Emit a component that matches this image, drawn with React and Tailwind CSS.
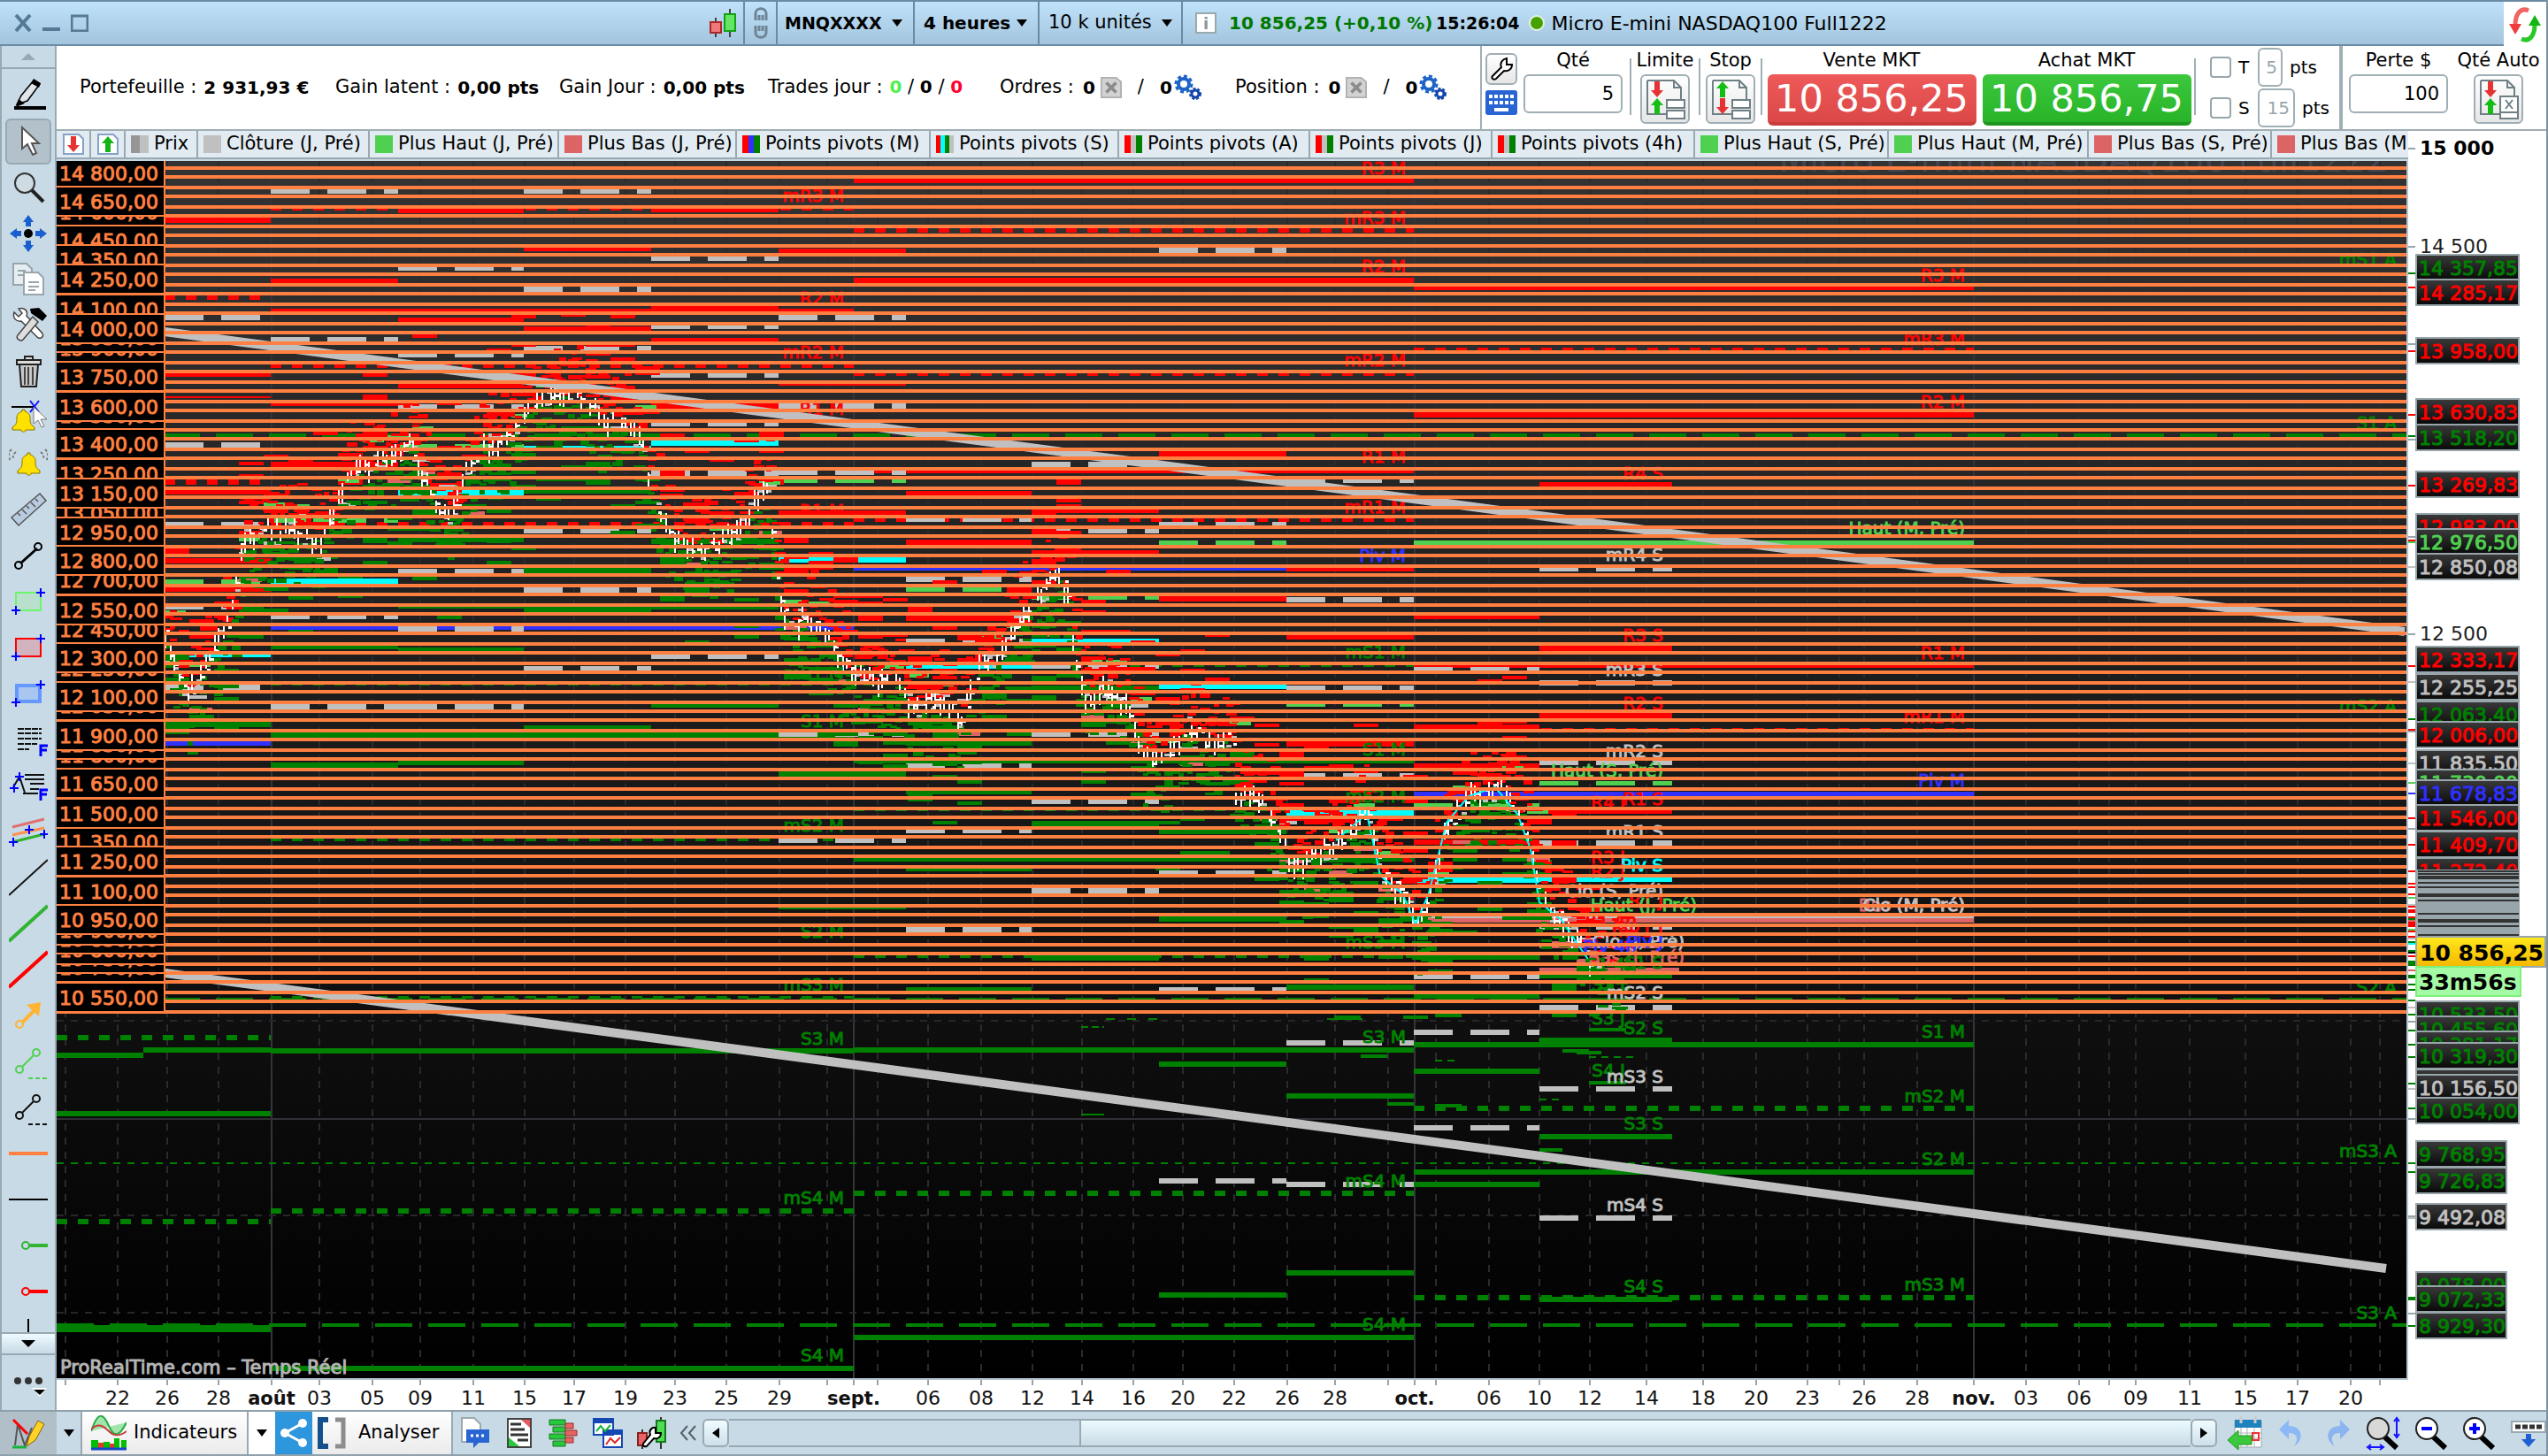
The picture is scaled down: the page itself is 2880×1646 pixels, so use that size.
import React from "react";

const RED = "#ff0000";
const GREEN = "#008000";
const LIME = "#50d050";
const GREY = "#c0c0c0";
const ROSE = "#dc6464";
const BLUE = "#3030ff";
const CYAN = "#00ffff";
const ORANGE = "#ff8040";
const EDGE = "#98a6ac";

const priceY = (p) => Math.floor((169 + (15000 - p) * 0.2193) / 2) * 2;
const priceText = (p) => {
  const s = String(p);
  return `${s.slice(0, -3)} ${s.slice(-3)},00`;
};

/* ---------- chart data ---------- */

const DATES = [
  [74, ""], [133, "22"], [189, "26"], [247, "28"], [307, "août"], [361, "03"], [421, "05"], [475, "09"],
  [535, "11"], [593, "15"], [649, "17"], [707, "19"], [763, "23"], [821, "25"], [881, "29"], [935, ""],
  [965, "sept."], [992, ""], [1049, "06"], [1109, "08"], [1167, "12"], [1223, "14"], [1281, "16"],
  [1337, "20"], [1395, "22"], [1455, "26"], [1509, "28"], [1569, ""], [1599, "oct."], [1623, ""],
  [1683, "06"], [1740, "10"], [1797, "12"], [1861, "14"], [1925, "18"], [1985, "20"], [2043, "23"],
  [2079, ""], [2107, "26"], [2167, "28"], [2231, "nov."], [2290, "03"], [2350, "06"], [2384, ""],
  [2414, "09"], [2475, "11"], [2538, "15"], [2597, "17"], [2657, "20"], [2690, ""],
];

const WEEKS = [186, 306, 450, 592, 736, 880, 1024, 1166, 1310, 1454, 1598, 1740, 1890];

const WEEK_LEVELS = [
  { r: [249, 423, 556, 634, 666], g: [819], w: [359, 503, 593, 686, 777], l: [657], c: [740], b: [840] },
  { r: [318, 456, 525], g: [731, 865], w: [216, 384, 697, 799], l: [588], c: [657], b: [] },
  { r: [238, 362, 436], g: [610, 685, 735, 862], w: [303, 401, 460, 646, 711, 799], l: [504], c: [557], b: [] },
  { r: [281, 372], g: [555, 645, 689, 823], w: [216, 327, 394, 600, 667, 756], l: [], c: [507], b: [] },
  { r: [237, 349, 385, 459], g: [612, 686, 797], w: [292, 369, 424, 479, 535, 742], l: [], c: [501], b: [] },
  { r: [284, 433, 580], g: [875, 1025], w: [359, 459, 534, 830, 950], l: [543], c: [633], b: [] },
  { r: [558, 613, 699], g: [840, 895, 982, 1119], w: [587, 655, 725, 866, 939, 1051], l: [666], c: [753], b: [] },
  { r: [577, 625], g: [778, 931, 1083], w: [525, 600, 753, 830, 906, 1007], l: [675], c: [725], b: [] },
  { r: [513, 677], g: [940, 1039, 1203, 1464], w: [283, 593, 987, 1119, 1335], l: [613], c: [776], b: [] },
  { r: [643, 720, 841], g: [1116, 1239, 1439], w: [543, 678, 778, 877, 1179, 1339], l: [796], c: [919], b: [] },
  { r: [697, 822, 866, 952], g: [1082, 1126, 1211, 1339], w: [757, 1104, 1167, 1275], l: [910], c: [995], b: [] },
  { r: [548, 733, 809, 917], g: [1103, 1176, 1285, 1469], w: [643, 772, 862, 953, 1048, 1139, 1231, 1377], l: [885], c: [994], b: [] },
];

const line = (x1, x2, y, color, h = 6, dash) => ({ x1, x2, y, color, h, dash });
const DOTS = "12 12";

const MONTH_LINES = [
  line(64, 306, 1173, GREEN, 6, DOTS), line(64, 162, 1193, GREEN), line(162, 306, 1187, GREEN), line(64, 306, 1259, GREEN),
  line(64, 306, 1381, GREEN, 6, DOTS), line(64, 306, 1502, GREEN, 8), line(186, 306, 336, RED, 6, DOTS),
  line(186, 306, 545, RED, 6, DOTS), line(186, 306, 449, RED, 2),
  line(306, 965, 237, RED, 2, DOTS), line(306, 965, 351, RED, 4), line(306, 965, 413, RED, 6, DOTS),
  line(306, 965, 592, RED, 4, DOTS), line(306, 965, 709, BLUE), line(306, 965, 773, GREEN, 3, DOTS),
  line(306, 965, 831, GREEN), line(306, 965, 949, GREEN, 3, DOTS), line(306, 965, 1068, GREEN, 2),
  line(306, 965, 1127, GREEN, 3, DOTS), line(306, 965, 1188, GREEN), line(306, 965, 1369, GREEN, 6, DOTS),
  line(306, 965, 1547, GREEN),
  line(965, 1598, 204, RED), line(965, 1598, 260, RED, 6, DOTS), line(965, 1598, 317, RED), line(965, 1598, 422, RED, 5, DOTS),
  line(965, 1598, 533, RED, 3), line(965, 1598, 588, RED, 4, DOTS), line(965, 1598, 643, BLUE, 4),
  line(965, 1598, 751, GREEN, 5, DOTS), line(965, 1598, 861, GREEN, 3), line(965, 1598, 916, GREEN, 2, DOTS),
  line(965, 1598, 972, GREEN, 4), line(965, 1598, 1081, GREEN, 3, DOTS), line(965, 1598, 1187, GREEN),
  line(965, 1598, 1349, GREEN, 6, DOTS), line(965, 1598, 1512, GREEN),
  line(1598, 2231, 325, RED, 5), line(1598, 2231, 395, RED, 5, DOTS), line(1598, 2231, 469, RED), line(1598, 2231, 752, RED),
  line(1598, 2231, 824, RED, 3, DOTS), line(1598, 2231, 613, LIME, 5), line(1598, 2231, 897, BLUE, 5),
  line(1598, 2231, 1036, GREY, 4), line(1598, 2231, 1040, ROSE, 5), line(1598, 2231, 1181, GREEN),
  line(1598, 2231, 1253, GREEN, 6, DOTS), line(1598, 2231, 1325, GREEN), line(1598, 2231, 1467, GREEN, 6, DOTS),
  line(64, 2720, 492, GREEN, 4, "42 18"), line(64, 2720, 1129, GREEN, 3, "42 18"),
  line(64, 2720, 1315, GREEN, 2, "8 8"), line(64, 2720, 1498, GREEN, 4, "42 18"),
];

const SMALL_LINES = [
  line(1508, 1538, 1150, GREEN, 4), line(1538, 1568, 1194, GREEN, 4), line(1568, 1598, 1248, GREEN, 4),
  line(1622, 1652, 1148, GREEN, 4), line(1622, 1652, 1250, GREEN, 4), line(1766, 1796, 1188, GREEN, 4),
  line(1740, 1766, 1300, GREEN, 4), line(1796, 1838, 1164, GREEN, 4), line(1796, 1838, 1224, GREEN, 4),
  line(1796, 1846, 1195, GREEN, 2, "8 6"), line(1740, 1766, 1243, GREEN, 2, "8 6"), line(1622, 1646, 1199, GREEN, 2, "8 6"),
  line(1222, 1248, 1260, GREEN, 2), line(1222, 1248, 1161, GREEN, 2, "8 4"), line(1250, 1320, 1152, GREEN, 2, "10 14"),
  line(1740, 1898, 1096, ROSE, 4), line(1740, 1880, 1070, ROSE, 4), line(1500, 1540, 1152, GREEN, 2),
];

const CURVE = [
  [186, 720], [210, 790], [235, 740], [262, 690], [272, 610], [300, 600], [330, 600], [360, 610], [385, 560], [395, 535],
  [430, 515], [445, 520], [460, 500], [480, 545], [500, 585], [515, 570], [525, 530], [545, 500], [560, 505], [575, 490],
  [595, 460], [610, 448], [640, 445], [665, 455], [680, 480], [700, 475], [725, 500], [735, 560], [750, 590], [770, 615],
  [800, 620], [830, 600], [850, 570], [868, 555], [872, 620], [878, 680], [890, 700], [910, 700], [930, 710], [945, 740],
  [960, 760], [985, 770], [1010, 770], [1030, 800], [1060, 790], [1085, 815], [1100, 760], [1130, 735], [1150, 700],
  [1175, 670], [1195, 650], [1208, 680], [1214, 750], [1225, 790], [1250, 775], [1275, 800], [1290, 850], [1310, 860],
  [1340, 820], [1365, 840], [1390, 830], [1395, 900], [1420, 905], [1440, 930], [1460, 980], [1480, 970], [1510, 950],
  [1545, 920], [1560, 990], [1585, 1010], [1600, 1045], [1615, 1010], [1635, 930], [1660, 900], [1690, 890], [1715, 920],
  [1730, 960], [1740, 1020], [1765, 1040], [1785, 1070], [1796, 1086],
];

const curveAt = (x) => {
  for (let i = 1; i < CURVE.length; i++) {
    const [x1, y1] = CURVE[i];
    const [x0, y0] = CURVE[i - 1];
    if (x <= x1) return y0 + ((y1 - y0) * (x - x0)) / (x1 - x0);
  }
  return CURVE[CURVE.length - 1][1];
};

const buildSeries = () => {
  let seed = 7321;
  const rnd = () => {
    seed = (seed * 1103515245 + 12345) % 2147483648;
    return seed / 2147483648;
  };
  const snap = (v) => Math.round(v / 2) * 2;
  const rects = [];
  const add = (x, y, w, h, color) => rects.push([snap(x), snap(y), snap(w), h, color]);
  for (let x = 186; x < 1800; x += 28) {
    const y = curveAt(Math.min(x, 1796));
    for (let k = 1; k <= 5; k++) {
      const far = k * (14 + rnd() * 12);
      if (rnd() < 0.7) add(x, y - far - 6, 28, rnd() < 0.4 ? 6 : 4, RED);
      if (rnd() < 0.8) add(x, y + far + 6, 28, rnd() < 0.5 ? 6 : 4, GREEN);
    }
    if (rnd() < 0.6) add(x, y - 14 - rnd() * 24, 24, 4, LIME);
    if (rnd() < 0.6) add(x, y + 14 + rnd() * 24, 26, 4, ROSE);
    if (rnd() < 0.5) add(x, y + rnd() * 60 - 30, 20, 4, GREY);
  }
  for (let x = 186; x < 1840; x += 5) {
    const y = curveAt(Math.min(x, 1796));
    for (let k = 0; k < 6; k++) {
      const off = 2 + k * 9 + rnd() * 14;
      if (rnd() < 0.68 - k * 0.07) add(x, y - off, 5 + rnd() * 8, rnd() < 0.4 ? 5 : 3, RED);
      if (rnd() < 0.76 - k * 0.08) add(x, y + off, 5 + rnd() * 8, rnd() < 0.5 ? 5 : 3, GREEN);
    }
    if (rnd() < 0.5) add(x, y + rnd() * 24 - 12, 6, 3, GREY);
    if (x < 1798) {
      if (rnd() < 0.85) add(x, y - 16 + rnd() * 16, 2, 10 + rnd() * 14, "#ffffff");
      if (rnd() < 0.6) add(x + 2, y - 8 + rnd() * 16, 3, 3, "#ffffff");
    }
  }
  return rects;
};
const SERIES = buildSeries();

const AOUT = 954;
const SEPT = 1589;
const OCT = 2221;
const WK = 1880;
const YEAR = 2709;
const LEVEL_TEXTS = [
  ["mR3 M", AOUT, 221, RED], ["R2 M", AOUT, 337, RED], ["mR2 M", AOUT, 398, RED], ["R1 M", AOUT, 462, RED], ["R1 M", AOUT, 577, RED],
  ["mS1 M", AOUT, 761, GREEN], ["S1 M", AOUT, 815, GREEN], ["mS2 M", AOUT, 933, GREEN], ["S2 M", AOUT, 1053, GREEN],
  ["mS3 M", AOUT, 1113, GREEN], ["S3 M", AOUT, 1174, GREEN], ["mS4 M", AOUT, 1354, GREEN], ["S4 M", AOUT, 1532, GREEN],
  ["R3 M", SEPT, 190, RED], ["mR3 M", SEPT, 246, RED], ["R2 M", SEPT, 301, RED], ["mR2 M", SEPT, 407, RED], ["R1 M", SEPT, 516, RED],
  ["mR1 M", SEPT, 573, RED], ["Piv M", SEPT, 628, BLUE], ["mS1 M", SEPT, 737, GREEN], ["S1 M", SEPT, 847, GREEN],
  ["mS2 M", SEPT, 900, GREEN], ["mS3 M", SEPT, 1065, GREEN], ["S3 M", SEPT, 1172, GREEN], ["mS4 M", SEPT, 1335, GREEN], ["S4 M", SEPT, 1497, GREEN],
  ["R3 M", OCT, 311, RED], ["mR3 M", OCT, 383, RED], ["R2 M", OCT, 454, RED], ["Haut (M, Pré)", OCT, 597, LIME], ["R1 M", OCT, 738, RED],
  ["mR1 M", OCT, 810, RED], ["Piv M", OCT, 882, BLUE], ["Bas (M, Pré)", OCT, 1023, ROSE], ["Clo (M, Pré)", OCT, 1023, GREY],
  ["S1 M", OCT, 1166, GREEN], ["mS2 M", OCT, 1239, GREEN], ["S2 M", OCT, 1310, GREEN], ["mS3 M", OCT, 1452, GREEN],
  ["R4 S", WK, 535, RED], ["mR4 S", WK, 627, GREY], ["R3 S", WK, 718, RED], ["mR3 S", WK, 757, GREY], ["R2 S", WK, 795, RED],
  ["mR2 S", WK, 849, GREY], ["Haut (S, Pré)", WK, 871, LIME], ["R1 S", WK, 903, RED], ["R4 J", 1837, 907, RED], ["mR1 S", WK, 940, GREY],
  ["R3 J", 1837, 969, RED], ["Piv S", WK, 978, CYAN], ["R2 J", 1837, 985, RED], ["Clo (S, Pré)", WK, 1007, GREY], ["R1 J", WK, 1018, RED],
  ["Haut (J, Pré)", 1918, 1023, LIME], ["R1 4h", 1850, 1040, RED], ["mR1 J", WK, 1052, RED], ["Clo (J, Pré)", 1904, 1064, GREY],
  ["Piv J", WK, 1064, BLUE], ["Piv 4h", 1850, 1070, BLUE], ["Bas (J, Pré)", 1904, 1082, ROSE], ["S1 4h", 1850, 1090, GREEN],
  ["S1 S", WK, 1088, GREEN], ["S2 J", 1837, 1113, GREEN], ["mS2 S", WK, 1122, GREY], ["S3 J", 1837, 1151, GREEN], ["S2 S", WK, 1162, GREEN],
  ["S4 J", 1837, 1210, GREEN], ["mS3 S", WK, 1217, GREY], ["S3 S", WK, 1270, GREEN], ["mS4 S", WK, 1362, GREY], ["S4 S", WK, 1454, GREEN],
  ["mS1 A", YEAR, 293, GREEN], ["S1 A", YEAR, 478, GREEN], ["mS2 A", YEAR, 798, GREEN], ["S2 A", YEAR, 1116, GREEN],
  ["mS3 A", YEAR, 1301, GREEN], ["S3 A", YEAR, 1484, GREEN],
];

const ORDER_LINES = Array.from({ length: 88 }, (_, i) => 10550 + i * 50);
const FRONT = [
  14450, 14100, 13250, 14350, 13750, 13050, 12950, 12700, 12450, 11650, 11350,
  14800, 14650, 14250, 14000, 13600, 13400, 13150, 12800, 12550, 12300, 12100, 11900, 11500, 11250, 11100, 10950, 10550,
];
const TAG_ORDER = [...ORDER_LINES.filter((p) => p <= 14850 && !FRONT.includes(p)), ...FRONT];

const Seg = ({ x1, x2, y, color, h, dash }) => (
  <line x1={x1} x2={x2} y1={y} y2={y} stroke={color} strokeWidth={h} strokeDasharray={dash} />
);

function Chart() {
  return (
    <svg className="block h-full w-full" viewBox="64 182 2658 1412" preserveAspectRatio="none" fontFamily="'DejaVu Sans', sans-serif" role="img" aria-label="Graphique MNQXXXX 4 heures">
      <defs>
        <linearGradient id="night" x1="0" x2="0" y1="0" y2="1">
          <stop offset="0" stopColor="#333333" />
          <stop offset="1" stopColor="#000000" />
        </linearGradient>
        <clipPath id="plot"><rect x="64" y="182" width="2656" height="1376" /></clipPath>
      </defs>
      <rect x="64" y="182" width="2658" height="1412" fill="#ffffff" />
      <rect x="64" y="182" width="2656" height="1376" fill="url(#night)" />
      <g clipPath="url(#plot)">
        <text x="2700" y="194" textAnchor="end" fontSize="40" fill="#44444e">Micro E-mini NASDAQ100 Full1222</text>
        <g shapeRendering="crispEdges">
          {DATES.map(([x, t]) => (
            <line key={x} x1={x} x2={x} y1="182" y2="1558" stroke={/[a-z]/.test(t) ? "#34343c" : "#2a2a30"} strokeWidth="2" strokeDasharray={/[a-z]/.test(t) ? undefined : "8 8"} />
          ))}
          {[14500, 14000, 13500, 13000, 12500, 12000, 11500, 11000, 10500, 9500, 9000].map((p) => (
            <line key={p} x1="64" x2="2720" y1={priceY(p)} y2={priceY(p)} stroke="#26262b" strokeWidth="2" strokeDasharray="8 8" />
          ))}
          <line x1="64" x2="2720" y1="1265" y2="1265" stroke="#303036" strokeWidth="2" />
          {MONTH_LINES.map((s, i) => <Seg key={i} {...s} />)}
          {WEEK_LEVELS.map((lv, i) => {
            const x1 = WEEKS[i];
            const x2 = WEEKS[i + 1];
            return (
              <g key={i}>
                {lv.g.map((y) => <Seg key={y} {...line(x1, x2, y, GREEN)} />)}
                {lv.b.map((y) => <Seg key={y} {...line(x1, x2, y, BLUE)} />)}
                {lv.r.map((y) => <Seg key={y} {...line(x1, x2, y, RED)} />)}
                {lv.l.map((y) => <Seg key={y} {...line(x1, x2, y, LIME, 5, "44 20")} />)}
                {lv.w.map((y) => <Seg key={y} {...line(x1, x2, y, GREY, 6, "44 20")} />)}
              </g>
            );
          })}
          {SMALL_LINES.map((s, i) => <Seg key={i} {...s} />)}
          {WEEK_LEVELS.map((lv, i) => lv.c.map((y) => <Seg key={i} {...line(WEEKS[i], WEEKS[i + 1], y, CYAN)} />))}
          {SERIES.map(([x, y, w, h, c], i) => <rect key={i} x={x} y={y} width={w} height={h} fill={c} />)}
        </g>
        <polyline fill="none" stroke={CYAN} strokeWidth="2" points={CURVE.filter(([x]) => x > 1500).map((p) => p.join(",")).join(" ")} />
        <g fontSize="20" strokeWidth="1">
          {LEVEL_TEXTS.map(([t, x, y, c], i) => (
            <text key={i} x={x} y={y + 7} textAnchor="end" fill={c} stroke={c}>{t}</text>
          ))}
        </g>
        <g stroke={GREY} strokeWidth="10">
          <line x1="186" y1="375" x2="2718" y2="714" />
          <line x1="186" y1="1100" x2="2697" y2="1434" />
        </g>
        <g shapeRendering="crispEdges">
          {ORDER_LINES.map((p) => (
            <rect key={p} x="64" y={priceY(p) - 2} width="2656" height="4" fill={ORANGE} />
          ))}
          <rect x="64" y="182" width="120" height="962" fill="#000000" />
        </g>
        <g fontSize="22" fill={ORANGE}>
          {TAG_ORDER.map((p) => {
            const y = priceY(p);
            return (
              <g key={p}>
                <rect x="60" y={y - 33} width="126" height="33" fill="#000000" stroke={ORANGE} strokeWidth="2" />
                <text x="67" y={y - 8} stroke={ORANGE} strokeWidth="1">{priceText(p)}</text>
              </g>
            );
          })}
        </g>
        <text x="68" y="1553" fontSize="21" fill="#b4b4b4" stroke="#b4b4b4" strokeWidth="1">ProRealTime.com – Temps Réel</text>
      </g>
      <rect x="64" y="1558" width="2658" height="2" fill="#b4c6d2" />
      <rect x="2720" y="182" width="2" height="1378" fill="#b4c6d2" />
      <g textAnchor="middle" fontSize="22" fill="#111111">
        {DATES.map(([x, t]) => (
          <g key={x}>
            <rect x={x - 1} y="1560" width="2" height="6" fill={EDGE} />
            <text x={x} y="1588" fontSize={/[a-z]/.test(t) ? 21 : 22} fontWeight={/[a-z]/.test(t) ? 700 : 400}>{t}</text>
          </g>
        ))}
      </g>
    </svg>
  );
}

/* ---------- price axis ---------- */

const AXIS_TAGS = [
  ["14 357,85", 287, GREEN], ["14 285,17", 315, RED], ["13 958,00", 381, RED], ["13 630,83", 450, RED], ["13 518,20", 479, GREEN],
  ["13 269,83", 532, RED], ["12 983,00", 580, RED], ["12 976,50", 597, LIME], ["12 850,08", 625, GREY], ["12 333,17", 730, RED],
  ["12 255,25", 761, GREY], ["12 063,40", 792, GREEN], ["12 006,00", 815, RED], ["11 835,50", 847, GREY], ["11 730,00", 869, LIME],
  ["11 678,83", 881, BLUE], ["11 546,00", 909, RED], ["11 409,70", 939, RED], ["11 272,40", 969, RED],
];
const AXIS_TAGS_LOW = [
  ["10 533,50", 1131, GREEN], ["10 455,60", 1148, GREEN], ["10 381,17", 1165, GREEN], ["10 319,30", 1178, GREEN], ["", 1208, GREEN],
  ["10 156,50", 1214, GREY], ["10 054,00", 1240, GREEN], ["9 768,95", 1289, GREEN], ["9 726,83", 1319, GREEN], ["9 492,08", 1360, GREY],
  ["9 078,00", 1437, GREEN], ["9 072,33", 1453, GREEN], ["8 929,30", 1483, GREEN],
];
const AXIS_TICKS = [
  [168, EDGE], [279, EDGE], [309, GREEN], [325, RED], [389, EDGE], [397, RED], [469, RED], [493, GREEN], [497, EDGE], [549, RED],
  [607, EDGE], [611, RED], [613, LIME], [641, GREY], [717, EDGE], [753, RED], [771, GREY], [813, GREEN], [825, RED], [827, EDGE],
  [863, GREY], [885, LIME], [897, BLUE], [925, RED], [937, EDGE], [955, RED], [985, RED], [999, RED], [1003, RED], [1011, RED],
  [1015, LIME], [1023, GREY], [1025, RED], [1029, RED], [1031, RED], [1037, RED], [1039, GREEN], [1041, ROSE], [1043, RED], [1045, RED],
  [1047, RED], [1051, LIME], [1053, RED], [1059, RED], [1061, GREY], [1065, GREEN], [1067, CYAN], [1075, GREEN], [1077, "#000000"],
  [1081, RED], [1087, GREEN], [1089, GREEN], [1091, GREEN], [1097, ROSE], [1103, GREEN], [1105, GREEN], [1113, GREEN], [1119, GREEN],
  [1131, GREEN], [1139, GREY], [1147, GREEN], [1155, EDGE], [1165, GREEN], [1181, GREEN], [1195, GREEN], [1225, GREEN], [1231, GREY],
  [1253, GREEN], [1265, EDGE], [1315, GREEN], [1325, GREEN], [1375, EDGE], [1377, GREY], [1467, GREEN], [1469, GREEN], [1485, EDGE], [1499, GREEN],
];

function AxisTag({ tag: [t, y, c] }) {
  const w = t.length === 8 ? 102 : 116;
  return (
    <g>
      <rect x="2731" y={y + 1} width={w} height="29" fill="url(#tag)" stroke={EDGE} strokeWidth="2" />
      <text x="2734" y={y + 24} fill={c} stroke={c} strokeWidth="1">{t}</text>
    </g>
  );
}

function PriceAxis() {
  return (
    <svg className="block h-full w-full" viewBox="2722 148 156 1446" preserveAspectRatio="none" fontFamily="'DejaVu Sans', sans-serif" fontSize="22" role="img" aria-label="Échelle des prix">
      <defs>
        <linearGradient id="tag" x1="0" x2="0" y1="0" y2="1">
          <stop offset="0" stopColor="#3a3a3a" /><stop offset="1" stopColor="#080808" />
        </linearGradient>
        <linearGradient id="gold" x1="0" x2="0" y1="0" y2="1">
          <stop offset="0" stopColor="#ffe81e" /><stop offset="1" stopColor="#f5b800" />
        </linearGradient>
      </defs>
      <rect x="2722" y="148" width="156" height="1446" fill="#ffffff" />
      <g shapeRendering="crispEdges">
        {AXIS_TICKS.map(([y, c], i) => <rect key={i} x="2722" y={y - 1} width="8" height="2" fill={c} />)}
      </g>
      <text x="2735" y="175" fontWeight="700">15 000</text>
      <text x="2735" y="286" fill="#222222">14 500</text>
      <text x="2735" y="724" fill="#222222">12 500</text>
      {AXIS_TAGS.map((t) => <AxisTag key={t[0]} tag={t} />)}
      <rect x="2730" y="983" width="118" height="78" fill={EDGE} />
      {[984, 987, 990, 997, 1002, 1010, 1017, 1032, 1039, 1046, 1056].map((y, i) => (
        <rect key={y} x="2733" y={y} width="114" height={i % 3 === 2 ? 4 : 2} fill="#333333" />
      ))}
      {AXIS_TAGS_LOW.map((t) => <AxisTag key={t[1]} tag={t} />)}
      <rect x="2731" y="1059" width="146" height="34" fill="url(#gold)" stroke={EDGE} strokeWidth="2" />
      <text x="2735" y="1086" fontSize="25" fontWeight="700">10 856,25</text>
      <rect x="2731" y="1093" width="118" height="33" fill="#a5fba5" stroke="#7cf07c" strokeWidth="2" />
      <text x="2734" y="1119" fontSize="25" fontWeight="700">33m56s</text>
    </svg>
  );
}

/* ---------- icons ---------- */

const Ico = ({ children, className = "h-11 w-11", box = "0 0 44 44" }) => (
  <svg className={className} viewBox={box} fill="none" aria-hidden="true">{children}</svg>
);

const Caret = () => <svg className="h-3 w-3 shrink-0" viewBox="0 0 12 12" aria-hidden="true"><path d="M0 2h12L6 10z" fill="#000" /></svg>;

const plusAt = (x, y) => <path key={`${x}-${y}`} d={`M${x - 5} ${y}h10M${x} ${y - 5}v10`} stroke="#0000ff" strokeWidth="2" />;
const Bell = ({ x = 0, y = 0 }) => (
  <path transform={`translate(${x} ${y})`} d="M1 20c5-3 5-6 5-11 0-4 3-6 6-7V0h3v2c3 1 6 3 6 7 0 5 0 8 5 11v3H16c0 3-5 3-5 0H1z" fill="#ffe100" stroke="#8a7600" />
);

const TOOLS = [
  ["Dessiner", <g key="i"><path d="M9 32l5-10L28 5l7 4-14 19z" fill="#dfe6ea" stroke="#000" strokeWidth="1.5" /><path d="M28 3l8 5-2 5-9-5zM8 35l3-9 7 5z" fill="#000" /><path d="M6 36h36" stroke="#000" strokeWidth="4" /></g>],
  ["Sélection", <path key="i" d="M15 6v24l6-5 6 12 4-2-5-11h8z" fill="#fff" stroke="#555" strokeWidth="2" />],
  ["Loupe", <g key="i"><circle cx="18" cy="17" r="11" fill="#cfdbe2" stroke="#333" strokeWidth="2" /><path d="M26 25l13 13" stroke="#222" strokeWidth="4" /></g>],
  ["Déplacer", <g key="i" fill="#1a5fd0"><path d="M22 1l6 8h-3v5h-6V9h-3zM22 43l6-8h-3v-5h-6v5h-3zM1 22l8-6v3h5v6H9v3zM43 22l-8-6v3h-5v6h5v3z" /><circle cx="22" cy="22" r="5" fill="#000" /></g>],
  ["Dupliquer", <g key="i" stroke="#98a6ac" strokeWidth="2"><path d="M5 4h15l6 6v18H5z" fill="#e6eef2" /><path d="M17 14h16l6 6v19H17z" fill="#fff" /><path d="M10 12h9M10 17h6M22 25h12M22 30h12M22 34h8" /></g>],
  ["Paramètres", <g key="i"><path d="M6 7l5 5 4-4-4-5c7-2 11 3 9 8l18 20c2 4-3 7-6 4L14 17C8 18 4 13 6 7z" fill="#fff" stroke="#444" strokeWidth="1.5" /><path d="M27 12l6 6-17 20c-3 3-9-2-6-5z" fill="#ddd" stroke="#444" strokeWidth="1.5" /><path d="M24 3l10-1 9 9-5 6-13-9z" fill="#000" /></g>],
  ["Supprimer", <g key="i"><path d="M12 14h21l-2 25H14z" fill="#c8c8c8" stroke="#222" strokeWidth="2" /><path d="M18 17v20M22 17v20M27 17v20" stroke="#444" strokeWidth="2" /><path d="M9 9h27v5H9zM18 5h9v4h-9z" fill="#ddd" stroke="#222" strokeWidth="2" /></g>],
  ["Alerte sur ligne", <g key="i"><path d="M3 10h26" stroke="#000" strokeWidth="2" /><path d="M24 3l10 13M34 3L24 16" stroke="#1111ff" strokeWidth="2" /><Bell x={3} y={13} /><path d="M28 10v19l5-4 4 8 3-1-4-8h7z" fill="#fff" stroke="#777" /></g>],
  ["Alerte", <g key="i"><Bell x={9} y={10} /><path d="M8 9c-3 2-4 5-3 9M3 6c-4 4-4 9-1 13M36 9c3 2 4 5 3 9M41 6c4 4 4 9 1 13" stroke="#777" strokeWidth="2" strokeDasharray="3 2" /></g>],
  ["Règle", <g key="i" stroke="#555" strokeWidth="1.5"><path d="M3 31L35 4l7 8-31 28z" fill="#b9cbe0" /><path d="M10 26l3 3M15 22l5 5M20 18l3 3M25 14l5 5M30 10l3 3" /></g>],
  ["Segment", <g key="i" stroke="#000" strokeWidth="2"><path d="M13 31L32 14" strokeWidth="3" /><circle cx="11" cy="33" r="4" /><circle cx="33" cy="12" r="4" /></g>],
  ["Rectangle vert", <g key="i"><path d="M8 12h28v20H8z" fill="#b9e0cd" stroke="#6cf56c" strokeWidth="2" />{plusAt(8, 32)}{plusAt(36, 12)}</g>],
  ["Rectangle rouge", <g key="i"><path d="M8 12h28v20H8z" fill="#d2b4be" stroke="#ff0000" strokeWidth="2" />{plusAt(8, 32)}{plusAt(36, 12)}</g>],
  ["Rectangle bleu", <g key="i"><path d="M9 13h26v18H9z" fill="#a9c6f0" stroke="#6699ff" strokeWidth="4" />{plusAt(8, 32)}{plusAt(36, 12)}</g>],
  ["Texte", <g key="i"><path d="M10 10h27M10 15h27M10 21h27M10 27h22M10 33h13" stroke="#111" strokeWidth="2" strokeDasharray="7 1" /><path d="M36 41V29h8M36 34h7" stroke="#0000ff" strokeWidth="3" /></g>],
  ["Texte ancré", <g key="i"><path d="M18 10h22M18 15h22M24 20h16M24 26h10M16 31h17" stroke="#111" strokeWidth="2" /><path d="M5 24L12 12l6 18" stroke="#111" strokeWidth="2" />{plusAt(12, 12)}{plusAt(6, 25)}<path d="M36 39V27h8M36 32h7" stroke="#0000ff" strokeWidth="3" /></g>],
  ["Canal", <g key="i" strokeWidth="3"><path d="M4 17l36-9" stroke="#e07070" /><path d="M4 26l36-8" stroke="#ff9050" /><path d="M4 34l36-9" stroke="#30b030" />{plusAt(5, 34)}{plusAt(23, 20)}{plusAt(40, 25)}</g>],
  ["Droite noire", <path key="i" d="M0 42L44 2" stroke="#111" strokeWidth="2" />],
  ["Droite verte", <path key="i" d="M0 42L44 2" stroke="#32b432" strokeWidth="4" />],
  ["Droite rouge", <path key="i" d="M0 42L44 2" stroke="#ff0000" strokeWidth="4" />],
  ["Flèche", <g key="i"><path d="M15 30L30 15" stroke="#ffb432" strokeWidth="4" /><path d="M20 10l16-3-2 16z" fill="#ffb432" /><circle cx="12" cy="32" r="4" stroke="#ffb432" strokeWidth="2" /></g>],
  ["Segment vert", <g key="i" stroke="#50d050" strokeWidth="2"><path d="M15 28L28 15" /><circle cx="12" cy="31" r="4" /><circle cx="31" cy="12" r="4" /><path d="M22 41h22" strokeDasharray="5 3" /></g>],
  ["Segment noir", <g key="i" stroke="#111" strokeWidth="2"><path d="M15 28L28 15" /><circle cx="12" cy="31" r="4" /><circle cx="31" cy="12" r="4" /><path d="M22 41h22" strokeDasharray="5 3" /></g>],
  ["Horizontale orange", <path key="i" d="M0 22h44" stroke="#ff8040" strokeWidth="4" />],
  ["Horizontale noire", <path key="i" d="M0 22h44" stroke="#000" strokeWidth="2" />],
  ["Demi-droite verte", <g key="i" stroke="#32b432"><path d="M22 22h22" strokeWidth="4" /><circle cx="19" cy="22" r="4" strokeWidth="2" /></g>],
  ["Demi-droite rouge", <g key="i" stroke="#ff0000"><path d="M22 22h22" strokeWidth="4" /><circle cx="19" cy="22" r="4" strokeWidth="2" /></g>],
  ["Verticale", <path key="i" d="M22 1v43" stroke="#000" strokeWidth="2" />],
];

const CancelIcon = () => (
  <Ico className="h-6 w-6 shrink-0" box="0 0 26 26"><path d="M1 1h18l6 5v19H1z" fill="#d2d2d2" stroke="#b0b0b0" strokeWidth="2" /><path d="M7 7l12 12M19 7L7 19" stroke="#8c8c8c" strokeWidth="4" /></Ico>
);
const GearsIcon = () => (
  <Ico className="h-8 w-8 shrink-0" box="0 0 32 32">
    <circle cx="11" cy="12" r="6" stroke="#1e64c8" strokeWidth="4" /><circle cx="11" cy="12" r="9" stroke="#1e64c8" strokeWidth="3" strokeDasharray="4 3" />
    <circle cx="24" cy="23" r="4" stroke="#1446aa" strokeWidth="3" /><circle cx="24" cy="23" r="6" stroke="#1446aa" strokeWidth="2" strokeDasharray="3 2" />
  </Ico>
);
const UpArrow = ({ x, y, c }) => <path d={`M${x} ${y}l7 8h-4v10h-6v-10h-4z`} fill={c} />;
const DownArrow = ({ x, y, c }) => <path d={`M${x} ${y}l7-8h-4v-10h-6v10h-4z`} fill={c} />;
const OrderIcon = ({ top, bottom, cross }) => (
  <Ico className="h-12 w-12" box="0 0 48 48">
    <path d="M4 3h30l8 8v15M4 3v38h24" stroke="#6e7f86" strokeWidth="2" />
    <path d="M34 3v8h8" stroke="#6e7f86" strokeWidth="2" />
    {top === "down" ? <DownArrow x={15} y={22} c="#e63232" /> : <UpArrow x={15} y={4} c="#14be14" />}
    {bottom === "up" ? <UpArrow x={15} y={23} c="#14be14" /> : <DownArrow x={15} y={41} c="#e63232" />}
    <path d="M26 25h20v9H26zM26 37h20v9H26z" fill="#fff" stroke="#6e7f86" strokeWidth="2" />
    {cross && <path d="M26 21h20v18H26z" fill="#fff" stroke="#6e7f86" strokeWidth="2" />}
    {cross && <path d="M32 25l8 10M40 25l-8 10" stroke="#6e7f86" strokeWidth="2" />}
  </Ico>
);
const PageArrow = ({ up }) => (
  <Ico className="h-6 w-6" box="0 0 24 24"><path d="M1 1h17l5 5v17H1z" fill="#fff" stroke="#86a2c8" strokeWidth="2" />{up ? <UpArrow x={12} y={3} c="#14b414" /> : <DownArrow x={12} y={21} c="#e63232" />}</Ico>
);

/* ---------- bars ---------- */

const Divider = () => <span className="h-12 w-0.5 shrink-0 bg-[#6a8ba3]" />;

function TitleBar() {
  return (
    <header className="flex h-[52px] shrink-0 items-center border-t-2 border-b-2 border-[#6a8ba3] bg-linear-to-b from-[#bfe3fb] to-[#a3c4dd]">
      <div className="flex w-[800px] shrink-0 items-center gap-3 pl-4">
        <button aria-label="Fermer"><Ico className="h-5 w-5" box="0 0 20 20"><path d="M2 1l16 18M18 1L2 19" stroke="#557a96" strokeWidth="4" /></Ico></button>
        <button aria-label="Réduire"><Ico className="h-5 w-5" box="0 0 20 20"><path d="M0 17h20" stroke="#557a96" strokeWidth="4" /></Ico></button>
        <button aria-label="Agrandir"><Ico className="h-5 w-5" box="0 0 20 20"><path d="M1 2h18v17H1z" stroke="#557a96" strokeWidth="3" /></Ico></button>
      </div>
      <div className="w-10 shrink-0"><Ico className="h-8 w-8" box="0 0 32 32"><path d="M9 10v22M25 0v32" stroke="#444" strokeWidth="2" /><path d="M3 15h12v12H3z" fill="#f07878" stroke="#aa2828" strokeWidth="2" /><path d="M19 6h12v19H19z" fill="#64e664" stroke="#14a014" strokeWidth="2" /></Ico></div>
      <Divider />
      <button aria-label="Lier" className="flex w-[35px] shrink-0 justify-center"><Ico className="h-9 w-5" box="0 0 20 36"><path d="M4 15V7c0-7 12-7 12 0v8M8 15V9M12 15V9M4 21v8c0 7 12 7 12 0v-8M8 21v6M12 21v6" stroke="#6e8494" strokeWidth="3" /></Ico></button>
      <Divider />
      <button className="flex w-[153px] shrink-0 items-center justify-between pr-3 pl-2 text-[19px] font-bold">MNQXXXX<Caret /></button>
      <Divider />
      <button className="flex w-[139px] shrink-0 items-center justify-between pr-3 pl-2.5 text-[20px] font-bold">4 heures<Caret /></button>
      <Divider />
      <button className="flex w-[160px] shrink-0 items-center justify-between pr-2.5 pl-2.5 text-[21px]">10 k unités<Caret /></button>
      <Divider />
      <div className="flex items-center pl-3.5 whitespace-nowrap">
        <span className="flex h-6 w-6 items-center justify-center border-2 border-[#9aa9b0] bg-white text-[18px] font-bold text-[#8796a0]">i</span>
        <span className="w-[248px] pl-3.5 text-[20px] font-bold text-[#007800]">10 856,25 (+0,10 %)</span>
        <span className="text-[19px] font-bold">15:26:04</span>
        <span className="mr-2 ml-2.5 h-[18px] w-[18px] rounded-full border-2 border-[#e4f2e0] bg-[#46a000]" />
        <span className="text-[22px]">Micro E-mini NASDAQ100 Full1222</span>
      </div>
      <button aria-label="Actualiser" className="mt-1 ml-auto flex h-[52px] w-12 items-center justify-center bg-white">
        <Ico className="h-10 w-10" box="0 0 40 40"><path d="M24 4C15 0 9 8 9 20" stroke="#f06464" strokeWidth="5" /><path d="M2 19h14l-7 12z" fill="#f03c3c" /><path d="M16 36c9 4 15-4 15-16" stroke="#28c828" strokeWidth="5" /><path d="M24 21h14l-7-12z" fill="#14b414" /></Ico>
      </button>
    </header>
  );
}

const Stat = ({ label, value, w }) => (
  <span className={`flex shrink-0 items-center gap-2 ${w}`}><span>{label}</span><b className="text-[20px]">{value}</b></span>
);

const smallButton = "flex items-center justify-center rounded-md border-2 border-[#a0aeb5] bg-linear-to-b from-white to-[#e6e6e6]";
const field = "rounded-md border-2 border-[#a0aeb5] bg-white text-right";

const Rule = () => <span className="mt-3.5 h-16 w-0.5 shrink-0 bg-[#a0aeb5]" />;
const Stack = ({ label, children, w }) => (
  <div className={`flex shrink-0 flex-col items-center ${w}`}><span className="h-8 leading-8 whitespace-nowrap">{label}</span>{children}</div>
);

function AccountBar() {
  return (
    <section className="flex h-24 shrink-0 border-b-2 border-[#a0aeb5] bg-white text-[21px] whitespace-nowrap">
      <div className="flex w-[1609px] shrink-0 items-center pl-[26px]">
        <Stat label="Portefeuille :" value="2 931,93 €" w="w-[289px]" />
        <Stat label="Gain latent :" value="0,00 pts" w="w-[253px]" />
        <Stat label="Gain Jour :" value="0,00 pts" w="w-[236px]" />
        <span className="flex w-[262px] shrink-0 items-center gap-2">
          <span>Trades jour :</span>
          <span><b className="text-[20px] text-[#50f050]">0</b> / <b className="text-[20px]">0</b> / <b className="text-[20px] text-[#ff0032]">0</b></span>
        </span>
        {["Ordres :", "Position :"].map((t) => (
          <span key={t} className="flex w-[266px] shrink-0 items-center gap-1.5">
            <span className="pr-1">{t}</span><b className="text-[20px]">0</b>
            <button aria-label="Annuler"><CancelIcon /></button>
            <span className="px-3">/</span><b className="text-[20px]">0</b>
            <button aria-label="Automatique" className="-ml-1"><GearsIcon /></button>
          </span>
        ))}
      </div>
      <div className="flex grow border-l-2 border-[#a0aeb5]">
        <div className="flex w-[46px] shrink-0 flex-col gap-1.5 pt-2 pl-1">
          <button aria-label="Réglages" className={`h-9 w-9 ${smallButton}`}><Ico className="h-7 w-7" box="0 0 28 28"><path d="M4 22L14 12c-2-5 1-9 6-10v7h6c0 5-4 8-9 7L8 25c-3 2-6-1-4-3z" fill="#fff" stroke="#000" strokeWidth="2" /></Ico></button>
          <button aria-label="Clavier"><Ico className="h-7 w-9" box="0 0 36 28"><rect width="36" height="28" rx="3" fill="#2864d2" /><path d="M4 7h28M4 14h28" stroke="#fff" strokeWidth="4" strokeDasharray="4 2" /><path d="M10 22h16" stroke="#fff" strokeWidth="4" /></Ico></button>
        </div>
        <Stack w="w-[114px]" label={<label htmlFor="qty">Qté</label>}><input id="qty" defaultValue="5" className={`h-11 w-[112px] px-2 ${field}`} /></Stack>
        <span className="w-[7px] shrink-0" /><Rule />
        <Stack w="w-[76px]" label="Limite"><button aria-label="Ordre limite" className={`h-[56px] w-[56px] ${smallButton}`}><OrderIcon top="down" bottom="up" /></button></Stack>
        <Rule />
        <Stack w="w-[68px]" label="Stop"><button aria-label="Ordre stop" className={`h-[56px] w-[56px] ${smallButton}`}><OrderIcon top="up" bottom="down" /></button></Stack>
        <Rule />
        <span className="w-0.5 shrink-0" />
        <Stack w="w-[243px]" label="Vente MKT"><button className="h-[58px] w-[236px] rounded-md border-b-4 border-[#c83c3c] bg-linear-to-b from-[#ee5a5a] to-[#dc4848] text-[43px] leading-none text-white">10 856,25</button></Stack>
        <Stack w="w-[243px]" label="Achat MKT"><button className="h-[58px] w-[236px] rounded-md border-b-4 border-[#1e9620] bg-linear-to-b from-[#3cc83c] to-[#28b428] text-[43px] leading-none text-white">10 856,75</button></Stack>
        <Rule />
        <div className="flex w-[162px] shrink-0 flex-col gap-0.5 pt-0.5 pl-4 text-[20px]">
          <div className="flex h-11 items-center gap-2"><input id="target" type="checkbox" className="h-6 w-6 appearance-none rounded-sm border-2 border-[#98a6ac] bg-white" /><label htmlFor="target" className="w-[14px]">T</label><input aria-label="Objectif" defaultValue="5" className={`h-11 w-7 px-1 text-[#98a6ac] ${field}`} />pts</div>
          <div className="flex h-11 items-center gap-2"><input id="stopbox" type="checkbox" className="h-6 w-6 appearance-none rounded-sm border-2 border-[#98a6ac] bg-white" /><label htmlFor="stopbox" className="w-[14px]">S</label><input aria-label="Stop" defaultValue="15" className={`h-11 w-[42px] px-1 text-[#98a6ac] ${field}`} />pts</div>
        </div>
        <div className="flex grow border-l-4 border-[#a0aeb5]">
          <Stack w="w-[126px]" label={<label htmlFor="loss">Perte $</label>}><input id="loss" defaultValue="100" className={`h-11 w-[112px] px-2 ${field}`} /></Stack>
          <Stack w="w-[100px]" label="Qté Auto"><button aria-label="Quantité automatique" className={`h-[56px] w-[56px] ${smallButton}`}><OrderIcon top="down" bottom="up" cross /></button></Stack>
        </div>
      </div>
    </section>
  );
}

const TABS = [
  ["Prix", ["#969696", "#c0c0c0"], "w-[82px]"],
  ["Clôture (J, Pré)", ["#c0c0c0"], "w-[194px]"],
  ["Plus Haut (J, Pré)", [LIME], "w-[214px]"],
  ["Plus Bas (J, Pré)", [ROSE], "w-[201px]"],
  ["Points pivots (M)", [RED, BLUE, GREEN], "w-[219px]"],
  ["Points pivots (S)", [RED, CYAN, GREEN, GREY], "w-[213px]"],
  ["Points pivots (A)", [RED, GREY, GREEN], "w-[216px]"],
  ["Points pivots (J)", [RED, GREY, GREEN], "w-[206px]"],
  ["Points pivots (4h)", [RED, GREY, GREEN], "w-[229px]"],
  ["Plus Haut (S, Pré)", [LIME], "w-[219px]"],
  ["Plus Haut (M, Pré)", [LIME], "w-[226px]"],
  ["Plus Bas (S, Pré)", [ROSE], "w-[207px]"],
  ["Plus Bas (M, Pré)", [ROSE], "w-[220px]"],
];

function IndicatorTabs() {
  const cell = "flex h-full shrink-0 items-center border-r-2 border-b-2 border-[#98a9b3] bg-[#e2ebf1]";
  return (
    <nav className="flex h-[34px] shrink-0 overflow-hidden border-b-2 border-[#c8d8e2] bg-[#e2ebf1] text-[21px] whitespace-nowrap">
      <button aria-label="Vendre" className={`${cell} w-[39px] justify-center`}><PageArrow /></button>
      <button aria-label="Acheter" className={`${cell} w-[39px] justify-center`}><PageArrow up /></button>
      {TABS.map(([t, colors, w]) => (
        <button key={t} className={`${cell} ${w} gap-1.5 pl-1.5`}>
          <span className="flex h-5 w-5 shrink-0">{colors.map((c) => <span key={c} className="h-full grow" style={{ background: c }} />)}</span>{t}
        </button>
      ))}
    </nav>
  );
}

function ToolColumn() {
  return (
    <aside className="flex w-16 shrink-0 flex-col border-r-2 border-l-2 border-[#98a9b3] bg-[#c8dae5]">
      <button aria-label="Défiler vers le haut" className="flex h-[26px] shrink-0 items-center justify-center border-b-2 border-[#98a9b3]"><svg className="h-2 w-4" viewBox="0 0 16 8"><path d="M0 8h16L8 0z" fill="#98a9b3" /></svg></button>
      <div className="flex min-h-0 grow basis-0 flex-col overflow-hidden pt-1">
        {TOOLS.map(([name, drawing], i) => (
          <button key={name} aria-label={name} className={i === 1 ? "mx-1 flex h-[52px] shrink-0 items-center justify-center rounded-md border-2 border-[#98a9b3] bg-[#b2c1ca]" : "flex h-[52px] shrink-0 items-center justify-center"}><Ico>{drawing}</Ico></button>
        ))}
      </div>
      <button aria-label="Défiler vers le bas" className="flex h-[26px] shrink-0 items-center justify-center border-y-2 border-[#98a9b3] bg-linear-to-b from-[#eefaff] to-[#c8dae5]"><svg className="h-2 w-4" viewBox="0 0 16 8"><path d="M0 0h16L8 8z" fill="#000" /></svg></button>
      <button aria-label="Plus d'outils" className="flex h-[62px] shrink-0 items-center justify-center"><Ico><g fill="#333"><circle cx="10" cy="20" r="4" /><circle cx="22" cy="20" r="4" /><circle cx="34" cy="20" r="4" /></g><path d="M26 28h17l-8 10z" fill="#fff" /><path d="M28 30h13l-6 6z" fill="#000" /></Ico></button>
    </aside>
  );
}

const iconButton = "flex w-[50px] shrink-0 items-center justify-center";
const Lens = ({ fill, children }) => (
  <Ico className="h-10 w-10" box="0 0 40 40"><path d="M20 23l15 14" stroke="#000" strokeWidth="6" /><circle cx="14" cy="15" r="12" fill={fill} stroke="#222" strokeWidth="2" />{children}</Ico>
);

function BottomBar() {
  return (
    <footer className="flex h-[52px] shrink-0 items-stretch border-t-2 border-b-2 border-[#8fa1ab] bg-[#c8dae5] text-[21px]">
      <button aria-label="Outils de dessin" className="flex w-16 shrink-0 items-center justify-center bg-[#b0bfc8]"><Ico className="h-9 w-10" box="0 0 40 36"><path d="M5 32L8 8l8 24 8-20" stroke="#555" strokeWidth="2" /><path d="M3 3l16 16" stroke="#ff0000" strokeWidth="3" /><path d="M2 34h16" stroke="#14b43c" strokeWidth="3" /><path d="M18 33l3-11L31 4l7 4-10 18z" fill="#ffd228" stroke="#8c6400" /></Ico></button>
      <button aria-label="Options de dessin" className="flex w-[29px] shrink-0 items-center justify-center border-r-2 border-[#98a9b3]"><Caret /></button>
      <button className="flex w-[188px] shrink-0 items-center gap-2 border-r-2 border-[#98a9b3] bg-linear-to-b from-white to-[#ebebeb] pl-2.5">
        <Ico className="h-10 w-10 shrink-0" box="0 0 40 40"><path d="M0 18C8-6 14-2 20 12s12 12 20-4" stroke="#28aa46" strokeWidth="2" fill="#a0e6aa" /><path d="M0 16c8-8 14-4 20 2s12 6 20 0" stroke="#c83c3c" strokeWidth="2" /><path d="M0 28h8v10H0zM14 30h7v8h-7zM26 26h6v12h-6zM34 28h6v10h-6z" fill="#00be00" /><path d="M8 31h6v7H8zM21 32h5v6h-5z" fill="#e63232" /><path d="M0 38h40" stroke="#1446c8" strokeWidth="3" /></Ico>
        Indicateurs
      </button>
      <button aria-label="Liste des indicateurs" className="flex w-[30px] shrink-0 items-center justify-center bg-white"><Caret /></button>
      <button aria-label="Partager" className="flex w-[42px] shrink-0 items-center justify-center bg-[#2e96dc]"><Ico className="h-8 w-8" box="0 0 32 32"><path d="M26 5L6 16l20 11" stroke="#fff" strokeWidth="3" /><circle cx="26" cy="5" r="5" fill="#fff" /><circle cx="6" cy="16" r="5" fill="#fff" /><circle cx="26" cy="27" r="5" fill="#fff" /></Ico></button>
      <button className="flex w-[159px] shrink-0 items-center gap-3 border-r-2 border-[#98a9b3] bg-linear-to-b from-white to-[#ebebeb] pl-1"><Ico className="h-9 w-9 shrink-0" box="0 0 36 36"><path d="M14 3H5v30h9" stroke="#14508c" strokeWidth="6" /><path d="M22 3h9v30h-9" stroke="#8c8c8c" strokeWidth="5" /></Ico>Analyser</button>
      <div className="flex w-[250px] shrink-0">
        <button aria-label="Messages" className={iconButton}><Ico className="h-9 w-9" box="0 0 36 36"><path d="M3 1h14l7 7v20H3z" fill="#fff" stroke="#9aa9b0" strokeWidth="2" /><path d="M8 14h26v15H22l-6 6v-6H8z" fill="#2864d2" /><path d="M13 21h16" stroke="#fff" strokeWidth="3" strokeDasharray="3 3" /></Ico></button>
        <button aria-label="Rapport" className={iconButton}><Ico className="h-9 w-8" box="0 0 32 36"><path d="M3 2h26v32H3z" fill="#fff" stroke="#444" strokeWidth="2" /><path d="M6 8h12M6 14h16M6 20h20M14 26h12" stroke="#333" strokeWidth="3" /><path d="M18 3h10v9z" fill="#e65a5a" /><path d="M4 33V23l12 10z" fill="#28c83c" /></Ico></button>
        <button aria-label="Carnet" className={iconButton}><Ico className="h-9 w-9" box="0 0 36 36"><path d="M2 3h18v6H2zM6 11h14v6H6zM2 19h18v6H2zM6 27h14v6H6z" fill="#28c83c" stroke="#147820" /><path d="M20 7h9v6h-9zM20 15h13v6H20zM20 23h9v6h-9z" fill="#e66464" stroke="#a02828" /></Ico></button>
        <button aria-label="Fenêtres" className={iconButton}><Ico className="h-9 w-9" box="0 0 36 36"><path d="M2 2h22v18H2zM13 15h21v19H13z" fill="#fff" stroke="#1446b4" strokeWidth="2" /><path d="M2 2h22v5H2zM13 14h21v6H13z" fill="#1446b4" /><path d="M5 16l5-6 5 6 6-7" stroke="#14b43c" strokeWidth="2" /><path d="M16 31l5-7 5 5 6-6" stroke="#dc2828" strokeWidth="2" /></Ico></button>
        <button aria-label="Réglages du graphique" className={iconButton}><Ico className="h-9 w-9" box="0 0 36 36"><path d="M7 14v22M28 0v36" stroke="#333" strokeWidth="2" /><path d="M2 18h10v14H2z" fill="#e66464" stroke="#8c2020" strokeWidth="2" /><path d="M23 4h10v24H23z" fill="#50dc50" stroke="#147820" strokeWidth="2" /><path d="M8 30l8-10c-2-5 2-9 6-8v6h6c0 5-4 7-8 6l-8 9c-3 1-5-1-4-3z" fill="#fff" stroke="#000" strokeWidth="2" /></Ico></button>
      </div>
      <button aria-label="Replier" className="flex w-8 shrink-0 items-center justify-center"><Ico className="h-5 w-5" box="0 0 20 20"><path d="M9 2L2 10l7 8M18 2l-7 8 7 8" stroke="#556066" strokeWidth="2" /></Ico></button>
      <div className="my-2 flex grow">
        <button aria-label="Défiler à gauche" className="flex w-[30px] items-center justify-center rounded-md border-2 border-[#98a9b3] bg-linear-to-b from-[#f0fcff] to-[#cfe0ea]"><svg className="h-3 w-2" viewBox="0 0 8 12"><path d="M8 0v12L0 6z" /></svg></button>
        <div className="flex grow justify-end border-y-2 border-[#98a9b3]"><div role="scrollbar" aria-controls="chart" aria-valuenow={100} className="w-[76%] border-l-2 border-[#98a9b3] bg-linear-to-b from-[#ebfbff] to-[#cadbe5]" /></div>
        <button aria-label="Défiler à droite" className="flex w-[30px] items-center justify-center rounded-md border-2 border-[#98a9b3] bg-linear-to-b from-[#f0fcff] to-[#cfe0ea]"><svg className="h-3 w-2" viewBox="0 0 8 12"><path d="M0 0v12l8-6z" /></svg></button>
      </div>
      <div className="flex w-[372px] shrink-0 items-center justify-between pl-3">
        <button aria-label="Aller à la date"><Ico className="h-10 w-10" box="0 0 40 40"><path d="M8 6h30v30H8z" fill="#fff" stroke="#9aa9b0" /><path d="M8 5h30v9H8z" fill="#1e82be" /><path d="M8 20h30M8 26h30M15 14v22M22 14v22M30 14v22" stroke="#aab4b9" /><path d="M15 1v8M31 1v8" stroke="#ccc" strokeWidth="3" /><path d="M28 20h7v8h-7z" stroke="#f03232" strokeWidth="2" /><path d="M0 28l12-11v6h15v10H12v6z" fill="#3cc83c" stroke="#1e961e" /></Ico></button>
        <button aria-label="Annuler l'action"><Ico className="h-9 w-9" box="0 0 36 36"><path d="M14 3v7c16 0 18 16 6 23 6-9 3-15-6-15v7L3 14z" fill="#8cb9f5" /></Ico></button>
        <button aria-label="Rétablir l'action"><Ico className="h-9 w-9" box="0 0 36 36"><path d="M22 3v7C6 10 4 26 16 33c-6-9-3-15 6-15v7l11-11z" fill="#8cb4f0" /></Ico></button>
        <button aria-label="Zoom ajusté"><Lens fill="#d8d8d8"><path d="M35 4v20M32 7l3-4 3 4M32 21l3 4 3-4M2 36h18M6 33l-4 3 4 3M16 33l4 3-4 3" stroke="#1414ff" strokeWidth="2" /></Lens></button>
        <button aria-label="Zoom arrière"><Lens fill="#fff"><path d="M8 15h12" stroke="#0000ff" strokeWidth="4" /></Lens></button>
        <button aria-label="Zoom avant"><Lens fill="#fff"><path d="M8 15h12M14 9v12" stroke="#0000ff" strokeWidth="4" /></Lens></button>
        <button aria-label="Barre d'outils"><Ico className="h-9 w-10" box="0 0 40 36"><path d="M1 5h38v12H1z" fill="#fff" stroke="#9aa9b0" strokeWidth="2" /><path d="M5 11h30" stroke="#333" strokeWidth="5" strokeDasharray="6 2" /><path d="M17 19h6v6h5l-8 9-8-9h5z" fill="#1e5fd2" /></Ico></button>
      </div>
    </footer>
  );
}

export default function App() {
  return (
    <div className="flex h-screen min-w-[2400px] flex-col overflow-hidden border-r-2 border-[#7d929e] bg-white font-['DejaVu_Sans',sans-serif] text-black">
      <TitleBar />
      <div className="flex min-h-0 grow">
        <ToolColumn />
        <main className="flex min-w-0 grow flex-col">
          <AccountBar />
          <div className="flex min-h-0 grow">
            <div className="flex min-w-0 grow basis-0 flex-col">
              <IndicatorTabs />
              <div id="chart" className="min-h-0 grow basis-0"><Chart /></div>
            </div>
            <div className="w-[156px] shrink-0"><PriceAxis /></div>
          </div>
        </main>
      </div>
      <BottomBar />
    </div>
  );
}
